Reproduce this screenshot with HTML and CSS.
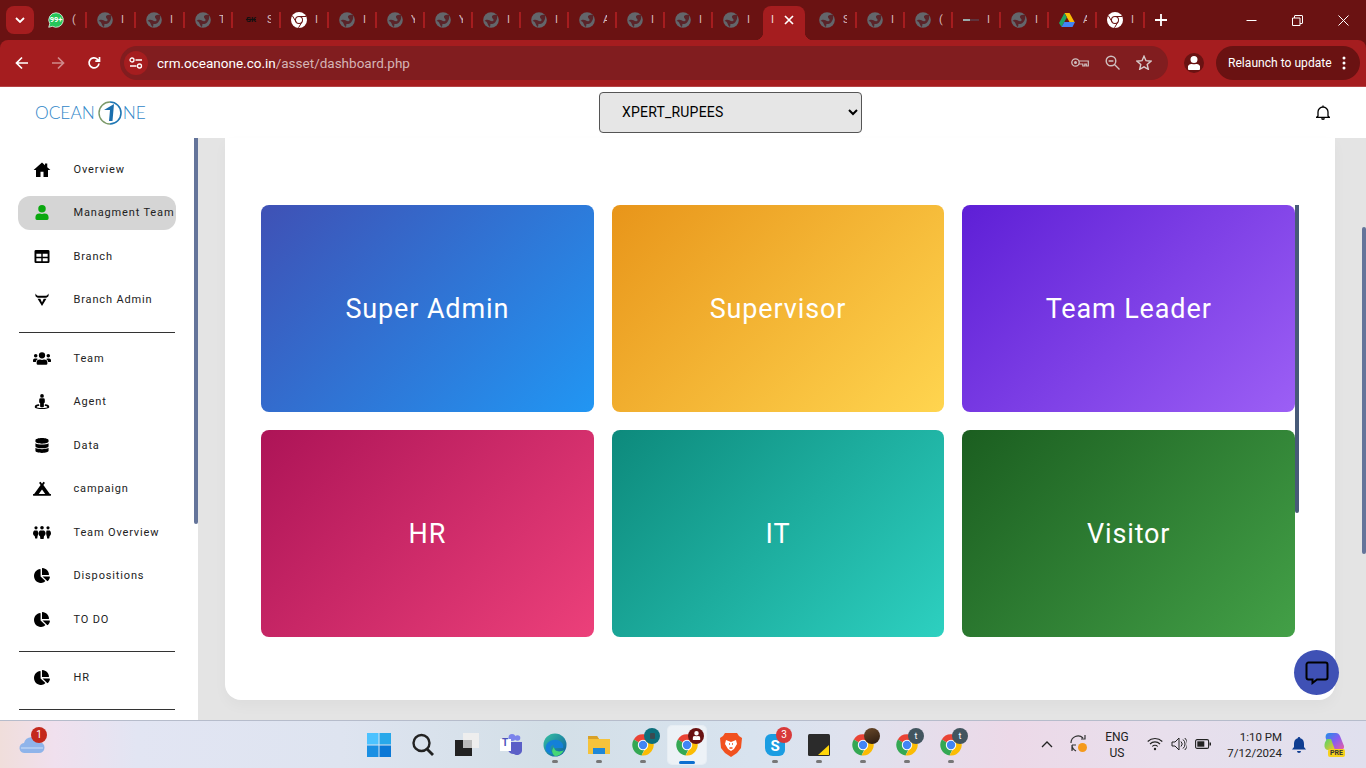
FILE: index.html
```html
<!DOCTYPE html>
<html lang="en">
<head>
<meta charset="utf-8">
<title>Dashboard</title>
<link rel="stylesheet" href="styles.css">
</head>
<body>
<svg class="defs" width="0" height="0" aria-hidden="true">
  <defs>
    <symbol id="globe" viewBox="0 0 16 16">
      <circle cx="8" cy="8" r="7.800" fill="#63666b"/>
      <path d="M13.500 2.800C10.500 2.500 8.500 3.500 9 5.200c.4 1.500 2 1.800 1.500 3.300-.5 1.300-2.500.7-4-.2C5 7.600 3 7.300 1.500 9c1.500.3 2.500 1 3 2.500.4 1.300 1 2.500 2 3.500 1-.8 1-2 .8-3 1.500.2 3.500-.2 4.700-1.500 1.500-1.700 2.800-4 2-7.700Z" fill="#5a2429"/>
    </symbol>
    <symbol id="chrome-w" viewBox="0 0 16 16">
      <circle cx="8" cy="8" r="8" fill="#fff"/>
      <circle cx="8" cy="8" r="4" fill="#6a1212"/>
      <circle cx="8" cy="8" r="3" fill="#fff"/>
      <path d="M8 4.500h7M5 9.800 1.500 4M11 9.800 7.500 15.800" stroke="#6a1212" stroke-width="1"/>
    </symbol>
    <symbol id="chrome-c" viewBox="0 0 24 24">
      <path d="M12 12 2.800 6.500A10.500 10.500 0 0 1 21.600 7.500H12Z" fill="#ea4335"/>
      <path d="M12 12 2.800 6.500A10.500 10.500 0 0 0 10.500 22.400L15 13Z" fill="#34a853"/>
      <path d="M12 7.500h9.600A10.500 10.500 0 0 1 10.500 22.400L16 13Z" fill="#fbbc04"/>
      <circle cx="12" cy="12" r="5.200" fill="#fff"/>
      <circle cx="12" cy="12" r="4.200" fill="#4285f4"/>
    </symbol>
    <symbol id="i-home" viewBox="1 2 22 20"><path d="M12 2.500.8 12.500h3.200V22h6v-7h4v7h6v-9.500h3.200L19 9V4h-3v2.400Z"/></symbol>
    <symbol id="i-user" viewBox="0 0 448 512"><path d="M224 256a128 128 0 1 0 0-256 128 128 0 0 0 0 256Zm90 32h-17a174 174 0 0 1-146 0h-17A134 134 0 0 0 0 422v42a48 48 0 0 0 48 48h352a48 48 0 0 0 48-48v-42a134 134 0 0 0-134-134Z"/></symbol>
    <symbol id="i-table" viewBox="0 0 512 512"><path d="M464 32H48A48 48 0 0 0 0 80v352a48 48 0 0 0 48 48h416a48 48 0 0 0 48-48V80a48 48 0 0 0-48-48ZM232 416H64v-104h168Zm0-152H64v-104h168Zm216 152H280v-104h168Zm0-152H280v-104h168Z"/></symbol>
    <symbol id="i-admin" viewBox="0 0 16 16"><path d="M1 1.500c1 1.600 2 2.500 3.500 2.500h7C13 4 14 3.100 15 1.500v2.700c-.8 1.200-2 2-3.500 2h-7C3 6.200 1.800 5.400 1 4.200ZM3.300 7.300h2.900L8 11.300l1.800-4h2.900L8 15Z"/></symbol>
    <symbol id="i-team" viewBox="0 0 640 512"><path d="M96 224a64 64 0 1 0 0-128 64 64 0 0 0 0 128Zm448 0a64 64 0 1 0 0-128 64 64 0 0 0 0 128Zm32 32h-64a64 64 0 0 0-45 18.600A146 146 0 0 1 542 384h66a32 32 0 0 0 32-32v-32a64 64 0 0 0-64-64Zm-256 0a112 112 0 1 0 0-224 112 112 0 0 0 0 224Zm77 32h-8a154 154 0 0 1-138 0h-8A115 115 0 0 0 128 403v29a48 48 0 0 0 48 48h288a48 48 0 0 0 48-48v-29a115 115 0 0 0-115-115Zm-224-13.400A64 64 0 0 0 128 256H64a64 64 0 0 0-64 64v32a32 32 0 0 0 32 32h66a146 146 0 0 1 75-109.400Z"/></symbol>
    <symbol id="i-agent" viewBox="0 0 512 512"><path d="M368 352c-6 0-10 3-13 6l-9 40c56 9 94 26 94 42 0 24-80 40-184 40s-184-16-184-40c0-16 38-33 94-42l-9-40c-3-3-7-6-13-6C60 362 8 392 8 440c0 50 126 72 248 72s248-22 248-72c0-48-52-78-136-88ZM256 128a64 64 0 1 0 0-128 64 64 0 0 0 0 128Zm-48 16a48 48 0 0 0-48 48v96a32 32 0 0 0 32 16v112a32 32 0 0 0 32 32h64a32 32 0 0 0 32-32V304a32 32 0 0 0 32-16v-96a48 48 0 0 0-48-48Z"/></symbol>
    <symbol id="i-data" viewBox="0 0 448 512"><path d="M448 73v46C448 159 348 192 224 192S0 159 0 119V73C0 33 100 0 224 0s224 33 224 73Zm0 103v103c0 40-100 73-224 73S0 319 0 279V176c48 33 136 49 224 49s176-16 224-49Zm0 160v103c0 40-100 73-224 73S0 489 0 439V336c48 33 136 49 224 49s176-16 224-49Z"/></symbol>
    <symbol id="i-camp" viewBox="0 0 640 512"><path d="M624 448h-24L369 130l47-64a16 16 0 0 0-3-22l-25-20a16 16 0 0 0-23 3l-45 62-45-62a16 16 0 0 0-23-3l-25 20a16 16 0 0 0-3 22l47 64L40 448H16a16 16 0 0 0-16 16v32a16 16 0 0 0 16 16h608a16 16 0 0 0 16-16v-32a16 16 0 0 0-16-16ZM320 288l116 160H204Z"/></symbol>
    <symbol id="i-over" viewBox="0 0 18 14"><circle cx="3" cy="2.300" r="1.600"/><circle cx="9" cy="2.300" r="1.800"/><circle cx="15" cy="2.300" r="1.600"/><path d="M1.200 5h3.200c1 1.600 1 4 .2 5.800l-.4 2.200h-2l-.4-2.200C.600 10 0 9 0 7.800c0-1 .4-2 1.200-2.800ZM7 5h4c1.300 1 1.800 2.200 1.500 3.500-.2.900-.8 1.700-1.500 2.300l-.4 2.700H7.400L7 10.800C6 10 5.500 9.100 5.500 8c0-1.200.5-2.200 1.500-3ZM13.600 5h3.200c.8.800 1.200 1.800 1.200 2.800 0 1.200-.6 2.200-1.400 3l-.4 2.200h-2l-.4-2.200c-.8-1.800-.8-4.200-.2-5.800Z"/></symbol>
    <symbol id="i-pie" viewBox="0 0 544 512"><path d="M527 288H290l158 158c6 6 16 7 22 1 39-37 65-86 73-141 1-9-7-18-16-18ZM512 224C503 103 409 9 288 0c-9-1-16 7-16 16v224h224c9 0 17-7 16-16ZM224 288V51c0-9-8-17-17-16C87 52-5 157 0 283c4 129 115 235 245 229 51-3 98-23 134-57 7-6 8-16 1-23Z"/></symbol>
  </defs>
</svg>

<div class="tabstrip">
  <button class="tabsearch"><svg width="10" height="6" viewBox="0 0 10 6"><path d="M1 1l4 4 4-4" fill="none" stroke="#fff" stroke-width="1.800"/></svg></button>
  <div class="tab tab-first"><svg class="fav" viewBox="0 0 18 18"><path d="M9 .8a8.200 8.200 0 0 0-7 12.400L.8 17.200l4.100-1.100A8.200 8.200 0 1 0 9 .8Z" fill="#25c659" stroke="#fff" stroke-width=".8"/></svg><span class="wa">99+</span><span class="sliver">(</span></div>
  <div class="tab tab-wide"><svg class="fav"><use href="#globe"/></svg><span class="sliver">I</span></div>
  <div class="tab tab-wide"><svg class="fav"><use href="#globe"/></svg><span class="sliver">I</span></div>
  <div class="tab"><svg class="fav"><use href="#globe"/></svg><span class="sliver">T</span></div>
  <div class="tab"><span class="fav skfav">SK</span><span class="sliver">S</span></div>
  <div class="tab"><svg class="fav"><use href="#chrome-w"/></svg><span class="sliver">I</span></div>
  <div class="tab"><svg class="fav"><use href="#globe"/></svg><span class="sliver">I</span></div>
  <div class="tab"><svg class="fav"><use href="#globe"/></svg><span class="sliver">Y</span></div>
  <div class="tab"><svg class="fav"><use href="#globe"/></svg><span class="sliver">Y</span></div>
  <div class="tab"><svg class="fav"><use href="#globe"/></svg><span class="sliver">I</span></div>
  <div class="tab"><svg class="fav"><use href="#globe"/></svg><span class="sliver">I</span></div>
  <div class="tab"><svg class="fav"><use href="#globe"/></svg><span class="sliver">A</span></div>
  <div class="tab"><svg class="fav"><use href="#globe"/></svg><span class="sliver">I</span></div>
  <div class="tab"><svg class="fav"><use href="#globe"/></svg><span class="sliver">I</span></div>
  <div class="tab tab-last"><svg class="fav"><use href="#globe"/></svg><span class="sliver">I</span></div>
  <div class="tab-active"><span class="sliver">I</span><svg width="10" height="10" viewBox="0 0 10 10"><path d="M1 1l8 8M9 1 1 9" stroke="#fff" stroke-width="1.700"/></svg></div>
  <div class="tab tab-next"><svg class="fav"><use href="#globe"/></svg><span class="sliver">S</span></div>
  <div class="tab"><svg class="fav"><use href="#globe"/></svg><span class="sliver">I</span></div>
  <div class="tab"><svg class="fav"><use href="#globe"/></svg><span class="sliver">(</span></div>
  <div class="tab"><svg class="fav" viewBox="0 0 16 16"><path d="M0 7h7v2H0z" fill="#9aa"/><path d="M7 7.500h9v1H7z" fill="#556"/></svg><span class="sliver">I</span></div>
  <div class="tab"><svg class="fav"><use href="#globe"/></svg><span class="sliver">I</span></div>
  <div class="tab"><svg class="fav" viewBox="0 0 16 16"><path d="M5.500 1h5l5 9h-5Z" fill="#fbbc04"/><path d="M5.500 1 0 11l2.500 4 5.300-9.500Z" fill="#1fa463"/><path d="M2.500 15h11l2.500-5H5.300Z" fill="#4285f4"/></svg><span class="sliver">A</span></div>
  <div class="tab"><svg class="fav"><use href="#chrome-w"/></svg><span class="sliver">I</span></div>
  <button class="newtab"><svg width="12" height="12" viewBox="0 0 12 12"><path d="M6 0v12M0 6h12" stroke="#fff" stroke-width="1.800"/></svg></button>
  <div class="winctl">
    <svg width="11" height="11" viewBox="0 0 11 11"><path d="M.5 5.500h10" stroke="#fff"/></svg>
    <svg width="11" height="11" viewBox="0 0 11 11"><path d="M.5 3h7.500v7.500H.5ZM2.500 3V1q0-.5.5-.5h7q.5 0 .5.500v7q0 .5-.5.500H8" fill="none" stroke="#fff"/></svg>
    <svg width="11" height="11" viewBox="0 0 11 11"><path d="M.5.500l10 10M10.500.5l-10 10" stroke="#fff"/></svg>
  </div>
</div>

<div class="toolbar">
  <svg class="navicon" width="14" height="14" viewBox="0 0 14 14"><path d="M13 7H2M7 1.500 1.500 7 7 12.500" fill="none" stroke="#fff" stroke-width="1.700"/></svg>
  <svg class="navicon dim" width="14" height="14" viewBox="0 0 14 14"><path d="M1 7h11M7 1.500 12.500 7 7 12.500" fill="none" stroke="#d08a8b" stroke-width="1.700"/></svg>
  <svg class="navicon" width="14" height="14" viewBox="0 0 14 14"><path d="M12 7.500A5 5 0 1 1 10.500 3.300L12.500 5M12.500 1v4.200H8.300" fill="none" stroke="#fff" stroke-width="1.700"/></svg>
  <div class="omnibox">
    <span class="sitebtn"><svg width="14" height="12" viewBox="0 0 14 12"><circle cx="3" cy="3" r="2" fill="none" stroke="#fff" stroke-width="1.300"/><path d="M6.500 3H13M1 9h6.500" stroke="#fff" stroke-width="1.300"/><circle cx="10.500" cy="9" r="2" fill="none" stroke="#fff" stroke-width="1.300"/></svg></span>
    <span class="url"><span class="host">crm.oceanone.co.in</span>/asset/dashboard.php</span>
    <span class="omni-icons">
      <svg width="18" height="11" viewBox="0 0 18 10"><circle cx="4.500" cy="5" r="3.700" fill="none" stroke="#cfc0c0" stroke-width="1.300"/><circle cx="4.500" cy="5" r="1.500" fill="#cfc0c0"/><path d="M8 3.500h9.300v5h-2V6.500h-1.500v2h-2V6.500H8" fill="none" stroke="#cfc0c0" stroke-width="1.200"/></svg>
      <svg width="15" height="15" viewBox="0 0 15 15"><circle cx="6" cy="6" r="4.800" fill="none" stroke="#cfc0c0" stroke-width="1.400"/><path d="M9.500 9.500l5 5M3.600 6h4.800" stroke="#cfc0c0" stroke-width="1.400"/></svg>
      <svg width="16" height="15" viewBox="0 0 16 15"><path d="M8 1.200l2 4.500 4.900.5-3.700 3.300 1.100 4.800L8 11.800l-4.300 2.500 1.100-4.800L1.100 6.200 6 5.700Z" fill="none" stroke="#d8cccc" stroke-width="1.400"/></svg>
    </span>
  </div>
  <span class="avatar"><svg width="14" height="14" viewBox="0 0 448 512"><use href="#i-user" fill="#fff"/></svg></span>
  <div class="relaunch"><span>Relaunch to update</span><svg width="4" height="14" viewBox="0 0 4 14"><circle cx="2" cy="2" r="1.500" fill="#fff"/><circle cx="2" cy="7" r="1.500" fill="#fff"/><circle cx="2" cy="12" r="1.500" fill="#fff"/></svg></div>
</div>

<div class="page">
  <header class="apphead">
    <div class="logo"><span>OCEAN</span><svg width="24" height="24" viewBox="0 0 24 24"><path d="M12 1a11 11 0 0 1 0 22" fill="none" stroke="#1f77b4" stroke-width="1.600"/><path d="M12 23A11 11 0 0 1 12 1" fill="none" stroke="#7c9a6a" stroke-width="1.400"/><path d="M6 9 16 3l-1.500 17h-3.500l1-11Z" fill="#1a6fae"/></svg><span>NE</span></div>
    <select class="teamselect"><option>XPERT_RUPEES</option></select>
    <svg class="bell" width="14" height="15" viewBox="0 0 14 15"><path d="M2 11V7a5 5 0 0 1 10 0v4l1.300 1.300H.7ZM7 .5v1.500" fill="none" stroke="#000" stroke-width="1.300"/><path d="M5 13.300h4a2 1.700 0 0 1-4 0Z" fill="#000"/></svg>
  </header>
  <div class="appbody">
    <nav class="sidebar">
      <div class="navlist">
        <a class="navitem"><svg class="ni"><use href="#i-home"/></svg>Overview</a>
        <a class="navitem active"><svg class="ni"><use href="#i-user"/></svg>Managment Team</a>
        <a class="navitem"><svg class="ni"><use href="#i-table"/></svg>Branch</a>
        <a class="navitem"><svg class="ni"><use href="#i-admin"/></svg>Branch Admin</a>
        <hr class="navrule">
        <a class="navitem"><svg class="ni"><use href="#i-team"/></svg>Team</a>
        <a class="navitem"><svg class="ni"><use href="#i-agent"/></svg>Agent</a>
        <a class="navitem"><svg class="ni"><use href="#i-data"/></svg>Data</a>
        <a class="navitem"><svg class="ni"><use href="#i-camp"/></svg>campaign</a>
        <a class="navitem"><svg class="ni"><use href="#i-over"/></svg>Team Overview</a>
        <a class="navitem"><svg class="ni"><use href="#i-pie"/></svg>Dispositions</a>
        <a class="navitem"><svg class="ni"><use href="#i-pie"/></svg>TO DO</a>
        <hr class="navrule">
        <a class="navitem"><svg class="ni"><use href="#i-pie"/></svg>HR</a>
        <hr class="navrule">
      </div>
      <div class="side-thumb"></div>
    </nav>
    <main class="content">
      <section class="panel">
        <div class="grid">
          <a class="tile t1">Super Admin</a>
          <a class="tile t2">Supervisor</a>
          <a class="tile t3">Team Leader</a>
          <a class="tile t4">HR</a>
          <a class="tile t5">IT</a>
          <a class="tile t6">Visitor</a>
        </div>
        <div class="panel-thumb"></div>
      </section>
      <div class="page-thumb"></div>
      <button class="chat"><svg width="24" height="24" viewBox="0 0 24 24"><path d="M3.500 1.500h17a2 2 0 0 1 2 2v13a2 2 0 0 1-2 2H12l-4.500 3.500V18.500h-4a2 2 0 0 1-2-2v-13a2 2 0 0 1 2-2Z" fill="none" stroke="#000" stroke-width="2"/></svg></button>
    </main>
  </div>
</div>

<footer class="taskbar">
  <div class="weather">
    <svg width="26" height="18" viewBox="0 0 26 18"><path d="M6 17a5 5 0 0 1-1-10 8 8 0 0 1 15-1 5.500 5.500 0 0 1 0 11Z" fill="#8fb4ea"/><path d="M2 12h22" stroke="#cfe0f8"/></svg>
    <span class="wbadge">1</span>
  </div>
  <div class="tb-center">
    <span class="tbi"><svg width="24" height="24" viewBox="0 0 24 24"><path d="M0 0h11.500v11.500H0Z" fill="#4cc2ff"/><path d="M12.500 0H24v11.500H12.500Z" fill="#28a8ea"/><path d="M0 12.500h11.500V24H0Z" fill="#1a8fe3"/><path d="M12.500 12.500H24V24H12.500Z" fill="#0b78d6"/></svg></span>
    <span class="tbi"><svg width="24" height="24" viewBox="0 0 24 24"><circle cx="10.500" cy="10" r="8" fill="none" stroke="#222" stroke-width="2.400"/><path d="M16 16l6 6" stroke="#222" stroke-width="2.800"/></svg></span>
    <span class="tbi"><svg width="24" height="24" viewBox="0 0 24 24"><path d="M8 0h16v15H8Z" fill="#eee"/><path d="M0 7h17v16H0Z" fill="#222"/><path d="M8 7h9v8H8Z" fill="#bbb"/></svg></span>
    <span class="tbi"><svg width="24" height="24" viewBox="0 0 24 24"><circle cx="18.500" cy="5" r="2.800" fill="#7b83eb"/><circle cx="13" cy="4.500" r="3.500" fill="#7b83eb"/><path d="M9 9h14v9a5 5 0 0 1-8 3 6 6 0 0 1-6-4Z" fill="#5b5fc7"/><path d="M1 6h11v12H1Z" fill="#fff"/></svg><span class="teamst">T</span></span>
    <span class="tbi dot"><svg width="24" height="24" viewBox="0 0 24 24"><defs><linearGradient id="edge" x1="0" y1="0" x2="1" y2="1"><stop offset="0" stop-color="#36c3a0"/><stop offset="1" stop-color="#0c59a4"/></linearGradient></defs><circle cx="12" cy="12" r="11.500" fill="url(#edge)"/><path d="M3 18C1 10 8 6 14 7c5 1 7 5 6 8h-8c-2 0-2-2-1-3-4 0-5 5-1 9-3 0-5-1-7-3Z" fill="#1480d8"/><path d="M11 14c0 4 5 6 10 3-2 4-5 6-9 6-3-2-4-6-1-9Z" fill="#45d776"/></svg></span>
    <span class="tbi dot"><svg width="24" height="22" viewBox="0 0 24 22"><path d="M1 2h9l2 3h11v15H1Z" fill="#f5c33b"/><path d="M1 2h9l2 3H1Z" fill="#d9a127"/><path d="M6 14h12v6H6Z" fill="#1e88d8"/></svg></span>
    <span class="tbi dot"><svg width="24" height="24"><use href="#chrome-c"/></svg><span class="ovl teal"><i class="tealcore"></i></span></span>
    <span class="tbi current"><svg width="24" height="24"><use href="#chrome-c"/></svg><span class="ovl maroon"><svg width="9" height="9" viewBox="0 0 448 512"><use href="#i-user" fill="#fff"/></svg></span></span>
    <span class="tbi"><svg width="22" height="26" viewBox="0 0 22 26"><path d="M5 1h12l2 3 3 2-1 10-4 5-6 4-6-4-4-5L0 6l3-2Z" fill="#f1511f"/><path d="M6 8l5 2 5-2 1 4-3 5-3 2-3-2-3-5Z" fill="#fff"/><path d="M9 12h1M12 12h1M9.500 16h3" stroke="#f1511f" stroke-width="1.500"/></svg></span>
    <span class="tbi dot"><svg width="22" height="24" viewBox="0 0 22 24"><path d="M7 1a6 6 0 0 0-6 6v8a8 8 0 0 0 8 8h6a6 6 0 0 0 6-6V9a8 8 0 0 0-8-8Z" fill="#1b9de2"/><text x="11" y="18" text-anchor="middle" class="skyp">S</text></svg><span class="cbadge">3</span></span>
    <span class="tbi dot"><svg width="22" height="22" viewBox="0 0 22 22"><rect width="22" height="22" rx="1.500" fill="#2b2b2b"/><path d="M21 11v10H10Z" fill="#ffd60a"/></svg></span>
    <span class="tbi dot"><svg width="24" height="24"><use href="#chrome-c"/></svg><span class="ovl photo"></span></span>
    <span class="tbi dot"><svg width="24" height="24"><use href="#chrome-c"/></svg><span class="ovl slate">t</span></span>
    <span class="tbi dot"><svg width="24" height="24"><use href="#chrome-c"/></svg><span class="ovl slate">t</span></span>
  </div>
  <div class="tray">
    <svg class="caret" width="12" height="7" viewBox="0 0 12 7"><path d="M1 6l5-5 5 5" fill="none" stroke="#222" stroke-width="1.300"/></svg>
    <span class="sync"><svg width="19" height="19" viewBox="0 0 19 19"><path d="M2 9a7 7 0 0 1 12-5M16 1v4h-4M3 11v6M3 11h4M3 11a7 7 0 0 0 4 6" fill="none" stroke="#333" stroke-width="1.200"/></svg><span class="syncdot"></span></span>
    <span class="lang">ENG<br>US</span>
    <svg class="wifi" width="16" height="14" viewBox="0 0 16 14"><path d="M.7 4.500a10.500 10.500 0 0 1 14.600 0M3 7a7 7 0 0 1 10 0M5.300 9.500a3.500 3.500 0 0 1 5.400 0" fill="none" stroke="#222" stroke-width="1.100"/><circle cx="8" cy="12" r="1.200" fill="#222"/></svg>
    <svg class="vol" width="16" height="14" viewBox="0 0 16 14"><path d="M1 5h3l4-4v12L4 9H1ZM10 4.500a3.500 3.500 0 0 1 0 5M12 2.500a6 6 0 0 1 0 9M13.800 1a8 8 0 0 1 0 12" fill="none" stroke="#222" stroke-width="1"/></svg>
    <svg class="batt" width="16" height="10" viewBox="0 0 16 10"><rect x=".6" y=".6" width="13" height="8.800" rx="1.500" fill="none" stroke="#222" stroke-width="1.100"/><rect x="2.300" y="2.300" width="7" height="5.400" fill="#222"/><rect x="14.500" y="3.500" width="1.500" height="3" fill="#222"/></svg>
    <span class="clock">1:10 PM<br>7/12/2024</span>
    <svg class="tbell" width="14" height="16" viewBox="0 0 14 16"><path d="M7 0a1.300 1.300 0 0 1 1.300 1.300C11 2 12 4.300 12 7v3l2 2.500H0L2 10V7c0-2.700 1-5 3.700-5.700A1.300 1.300 0 0 1 7 0ZM5 14h4a2 2 0 0 1-4 0Z" fill="#0f3d91"/></svg>
    <span class="copilot"><svg width="24" height="20" viewBox="0 0 24 20"><defs><linearGradient id="cop" x1="0" y1="0" x2="1" y2="1"><stop offset="0" stop-color="#1f8fe8"/><stop offset=".5" stop-color="#8a5cf0"/><stop offset="1" stop-color="#f0609d"/></linearGradient><linearGradient id="cop2" x1="0" y1="0" x2="1" y2="1"><stop offset="0" stop-color="#4fd46a"/><stop offset="1" stop-color="#f5c52b"/></linearGradient></defs><path d="M7 1h7c2 0 3 1 4 3l4 10c.500 2-1 4-3 4h-7c-2 0-3-1-4-3L4 7C3 4 4 1 7 1Z" fill="url(#cop)"/><path d="M5 7h4l4 11H6C2 18 1 12 5 7Z" fill="url(#cop2)"/></svg><span class="pre">PRE</span></span>
  </div>
</footer>
</body>
</html>
```

FILE: styles.css
```css
* { box-sizing: border-box; }
html, body { margin: 0; height: 100%; overflow: hidden; }
body { width: 1366px; height: 768px; display: flex; flex-direction: column; font-family: Roboto, "Liberation Sans", sans-serif; background: #6a1212; }
.defs { position: absolute; }

/* tab strip */
.tabstrip { height: 40px; background: #6a1212; display: flex; align-items: flex-start; flex: none; }
.tabsearch { width: 28px; height: 28px; margin: 6px 0 0 6px; background: #a51d1f; border: 0; border-radius: 8px; display: flex; align-items: center; justify-content: center; padding: 0; flex: none; }
.tab { width: 48px; height: 28px; margin-top: 6px; display: flex; align-items: center; padding-left: 10px; position: relative; flex: none; overflow: hidden; }
.tab::after { content: ""; position: absolute; right: 0; top: 6px; width: 2px; height: 16px; background: #a51d1f; }
.tab-first { width: 49px; margin-left: 4px; }
.tab-wide { width: 49px; }
.tab-last { width: 50px; }
.tab-last::after { display: none; }
.tab-next { margin-left: 4px; }
.fav { width: 16px; height: 16px; flex: none; }
.sliver { width: 4px; overflow: hidden; margin-left: 8px; color: #d9bcbc; font-size: 11px; line-height: 14px; flex: none; }
.wa { position: absolute; left: 10px; top: 9px; width: 16px; text-align: center; color: #fff; font-size: 7.500px; line-height: 9px; font-weight: 700; }
.skfav { color: #111; font-size: 8px; line-height: 16px; text-align: center; font-weight: 700; text-decoration: line-through; }
.tab-active { width: 42px; height: 34px; margin-top: 6px; background: #a51d1f; border-radius: 8px 8px 0 0; display: flex; align-items: center; padding: 0 0 6px 8px; position: relative; flex: none; gap: 9px; }
.tab-active .sliver { margin-left: 0; color: #f0dcdc; }
.tab-active::before, .tab-active::after { content: ""; position: absolute; bottom: 0; width: 8px; height: 8px; background: radial-gradient(circle at 0 0, transparent 8px, #a51d1f 8.500px); }
.tab-active::before { left: -8px; }
.tab-active::after { right: -8px; background: radial-gradient(circle at 100% 0, transparent 8px, #a51d1f 8.500px); }
.newtab { width: 28px; height: 28px; margin: 6px 0 0 2px; background: none; border: 0; display: flex; align-items: center; justify-content: center; padding: 0; flex: none; }
.winctl { margin-left: auto; width: 138px; height: 40px; display: flex; align-items: center; justify-content: space-around; flex: none; }

/* toolbar */
.toolbar { height: 47px; background: #a51d1f; border-bottom: 1px solid #b54344; border-radius: 8px 8px 0 0; display: flex; align-items: center; padding: 0 6px 1px 15px; flex: none; }
.navicon { flex: none; margin-right: 22px; }
.navicon + .navicon + .navicon { margin-right: 19px; }
.omnibox { width: 1048px; height: 34px; background: #811d1f; border-radius: 17px; display: flex; align-items: center; padding: 0 16px 0 4px; flex: none; }
.sitebtn { width: 24px; height: 24px; border-radius: 50%; background: #a51d1f; display: flex; align-items: center; justify-content: center; flex: none; }
.url { margin-left: 9px; font-size: 13.500px; color: #d5b4b5; }
.host { color: #fff; }
.omni-icons { margin-left: auto; display: flex; align-items: center; gap: 16px; }
.avatar { width: 20px; height: 20px; margin-left: 16px; border-radius: 50%; background: #6a1212; display: flex; align-items: center; justify-content: center; flex: none; }
.relaunch { width: 144px; height: 34px; margin-left: 12px; border-radius: 17px; background: #6a1212; color: #fff; font-size: 12.100px; display: flex; align-items: center; justify-content: space-between; padding: 0 14px 0 12px; flex: none; }

/* page */
.page { flex: 1; min-height: 0; display: flex; flex-direction: column; background: #e4e4e4; overflow: hidden; }
.apphead { height: 51px; background: #fff; display: flex; align-items: center; position: relative; flex: none; padding-left: 35px; }
.logo { display: flex; align-items: center; color: #2f86c8; font-family: Lato, sans-serif; font-weight: 300; font-size: 17.300px; width: 564px; flex: none; }
.logo svg { margin: 0 1px 0 3px; }
.teamselect { width: 263px; height: 41px; background: #e6e6e6; border: 1px solid #555; border-radius: 4px; font-family: Roboto, sans-serif; font-size: 14px; letter-spacing: .2px; padding: 0 0 2px 18px; color: #000; flex: none; }
.bell { margin-left: 454px; flex: none; }
.appbody { flex: 1; min-height: 0; display: flex; }
.sidebar { width: 198px; background: #fff; position: relative; overflow: hidden; flex: none; }
.navlist { padding: 14.200px 22px 0 18px; display: flex; flex-direction: column; }
.navitem { height: 34.500px; margin-bottom: 9px; display: flex; align-items: center; border-radius: 12px; font-size: 11px; letter-spacing: .85px; color: #222; padding-left: 15px; white-space: nowrap; flex: none; }
.active { background: #d5d5d5; }
.ni { width: 18px; height: 15px; margin-right: 22.500px; flex: none; fill: #000; }
.active .ni { fill: #0aa80f; }
.navrule { margin: 5.400px 0 8.300px 1px; width: 156px; border: 0; border-top: 1px solid #333; height: 0; flex: none; }
.side-thumb { position: absolute; left: 194px; top: 0; width: 4px; height: 386px; background: #64749a; border-radius: 0 0 2px 2px; }
.content { flex: 1; position: relative; padding-left: 27px; min-width: 0; }
.panel { width: 1110px; height: 562px; background: #fff; border-radius: 0 0 16px 16px; box-shadow: 0 6px 14px rgba(0,0,0,.03); padding: 67px 40px 0 36px; position: relative; }
.grid { display: grid; grid-template-columns: repeat(3, 1fr); grid-template-rows: 207px 207px; gap: 18px; }
.tile { display: flex; align-items: center; justify-content: center; border-radius: 8px; color: #fff; font-size: 27px; font-weight: 400; letter-spacing: .87px; }
.t1 { background: linear-gradient(135deg, #3f51b5, #2196f3); }
.t2 { background: linear-gradient(135deg, #e8951a, #ffd54f); }
.t3 { background: linear-gradient(135deg, #5e1fd6, #9c5ff5); }
.t4 { background: linear-gradient(135deg, #ad1457, #ec407a); }
.t5 { background: linear-gradient(135deg, #0d8a7c, #2dd0c0); }
.t6 { background: linear-gradient(135deg, #1b5e20, #43a047); }
.panel-thumb { position: absolute; left: 1070px; top: 67px; width: 4px; height: 308px; background: #475a78; border-radius: 0 0 2px 2px; }
.page-thumb { position: absolute; right: 0; top: 89px; width: 4px; height: 327px; background: #64749a; border-radius: 2px; }
.chat { position: absolute; left: 1096px; top: 512px; width: 45px; height: 45px; border-radius: 50%; background: #3f51b5; border: 0; padding: 0; display: flex; align-items: center; justify-content: center; }

/* taskbar */
.taskbar { height: 48px; flex: none; border-top: 1px solid #b6bccb; background: linear-gradient(90deg, #f0dedb 0, #f0e0ee 4%, #e2e5f3 10%, #dee4f0 25%, #d3dfe7 40%, #d8e3ef 55%, #dfe2ee 62%, #ecd9e8 74%, #e8dfec 85%, #e0e0ee 100%); display: flex; align-items: center; position: relative; }
.weather { width: 357px; padding-left: 19px; position: relative; height: 47px; display: flex; align-items: center; flex: none; }
.wbadge { position: absolute; left: 31px; top: 6px; width: 16px; height: 16px; border-radius: 50%; background: #c4291c; color: #fff; font-size: 10px; line-height: 16px; text-align: center; }
.tb-center { display: flex; flex: none; width: 615px; }
.tbi { width: 44px; height: 46px; display: flex; align-items: center; justify-content: center; position: relative; flex: none; }
.dot::after { content: ""; position: absolute; left: 19px; bottom: 5px; width: 6px; height: 3px; border-radius: 2px; background: #777; }
.current { background: rgba(255,255,255,.55); border-radius: 4px; box-shadow: 0 0 0 1px rgba(255,255,255,.4); width: 38px; height: 38px; margin: 4px 3px 0; }
.current::after { content: ""; position: absolute; left: 11px; bottom: 0; width: 16px; height: 3px; border-radius: 2px; background: #0b6fd0; }
.teamst { position: absolute; left: 13px; top: 15px; font-size: 10px; font-weight: 700; color: #4b53bc; }
.skyp { fill: #fff; font-family: Roboto, sans-serif; font-size: 15px; font-weight: 700; }
.ovl { position: absolute; left: 23px; top: 6px; width: 16px; height: 16px; border-radius: 50%; display: flex; align-items: center; justify-content: center; font-size: 9px; color: #fff; }
.current .ovl { left: 20px; top: 2px; }
.teal { background: #0d6f7c; }
.tealcore { width: 5px; height: 6px; background: #3a4a50; border-radius: 1px; }
.maroon { background: #6a1212; }
.photo { background: linear-gradient(160deg, #6b4a2a, #2a1a10); }
.slate { background: #42555f; }
.cbadge { position: absolute; left: 23px; top: 5px; width: 16px; height: 16px; border-radius: 50%; background: #d83a3a; color: #fff; font-size: 10px; line-height: 16px; text-align: center; }
.tray { flex: 1; position: relative; height: 47px; font-size: 12px; color: #222; }
.tray > * { position: absolute; }
.caret { left: 69px; top: 20px; }
.sync { left: 97px; top: 13px; width: 22px; height: 22px; }
.syncdot { position: absolute; left: 9px; top: 9px; width: 9px; height: 9px; border-radius: 50%; background: #f59a1b; }
.lang { left: 125px; width: 40px; top: 8px; text-align: center; line-height: 16px; }
.wifi { left: 175px; top: 16px; }
.vol { left: 199px; top: 16px; }
.batt { left: 223px; top: 18px; }
.clock { left: 236px; width: 74px; top: 7.500px; text-align: right; line-height: 16px; font-size: 11.500px; }
.tbell { left: 320px; top: 16px; }
.copilot { left: 350px; top: 11px; width: 26px; height: 26px; }
.pre { position: absolute; left: 6px; top: 17px; background: #f7d21f; color: #333; font-size: 7px; font-weight: 700; padding: 0 2px; border-radius: 2px; line-height: 8px; }
```
